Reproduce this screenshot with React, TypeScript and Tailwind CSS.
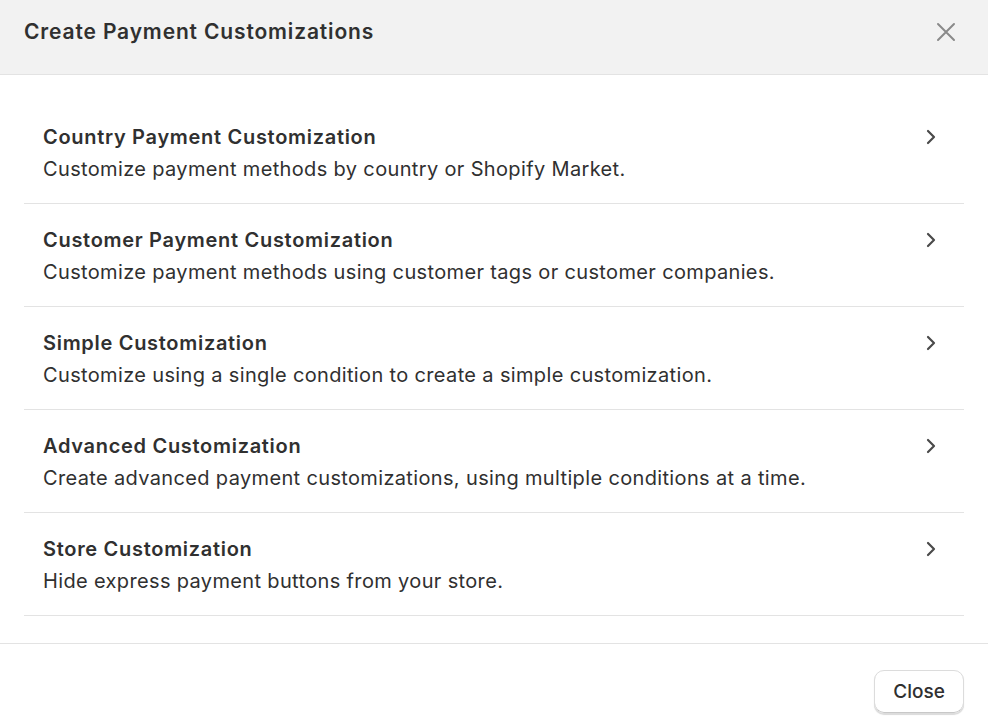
import React from 'react';

const options = [
  {
    title: 'Country Payment Customization',
    description: 'Customize payment methods by country or Shopify Market.',
  },
  {
    title: 'Customer Payment Customization',
    description: 'Customize payment methods using customer tags or customer companies.',
  },
  {
    title: 'Simple Customization',
    description: 'Customize using a single condition to create a simple customization.',
  },
  {
    title: 'Advanced Customization',
    description: 'Create advanced payment customizations, using multiple conditions at a time.',
  },
  {
    title: 'Store Customization',
    description: 'Hide express payment buttons from your store.',
  },
];

const App: React.FC = () => {
  return (
    <div className="h-[724px] w-[988px] overflow-hidden bg-white font-['Inter',sans-serif] text-[#303030]">
      {/* Header */}
      <div className="flex h-[75px] items-start justify-between border-b border-[#e3e3e3] bg-[#f2f2f2] pl-6 pr-[30px] pt-[18px]">
        <h1 className="text-[21px] font-semibold leading-7 tracking-[0.85px]">Create Payment Customizations</h1>
        <button className="mt-[2px] flex h-6 w-6 items-center justify-center text-[#8a8a8a]">
          <svg width="20" height="20" viewBox="0 0 20 20" fill="none" stroke="currentColor" strokeWidth="2" strokeLinecap="round">
            <path d="M2 2l16 16M18 2L2 18" />
          </svg>
        </button>
      </div>

      {/* Body */}
      <div className="px-6 pt-[26px] pb-[27px]">
        {options.map((o) => (
          <div key={o.title} className="flex items-start justify-between border-b border-[#e3e3e3] pl-[19px] pr-[28px] pt-5 pb-[18px]">
            <div>
              <div className="text-[20px] font-semibold leading-8 tracking-[0.7px]">{o.title}</div>
              <div className="text-[20px] leading-8 tracking-[0.35px]">{o.description}</div>
            </div>
            <svg className="mt-[8px] text-[#4a4a4a]" width="10" height="16" viewBox="0 0 10 16" fill="none" stroke="currentColor" strokeWidth="2.2" strokeLinecap="round" strokeLinejoin="round">
              <path d="M2 2l6 6-6 6" />
            </svg>
          </div>
        ))}
      </div>

      {/* Footer */}
      <div className="flex justify-end border-t border-[#e3e3e3] px-6 pt-[26px]">
        <button className="h-[44px] w-[90px] rounded-[10px] border border-[#dcdcdc] bg-white text-[19px] font-medium text-[#303030] shadow-[0_1px_1px_rgba(0,0,0,0.15),inset_0_-1px_0_#c8c8c8]">
          Close
        </button>
      </div>
    </div>
  );
};

export default App;
